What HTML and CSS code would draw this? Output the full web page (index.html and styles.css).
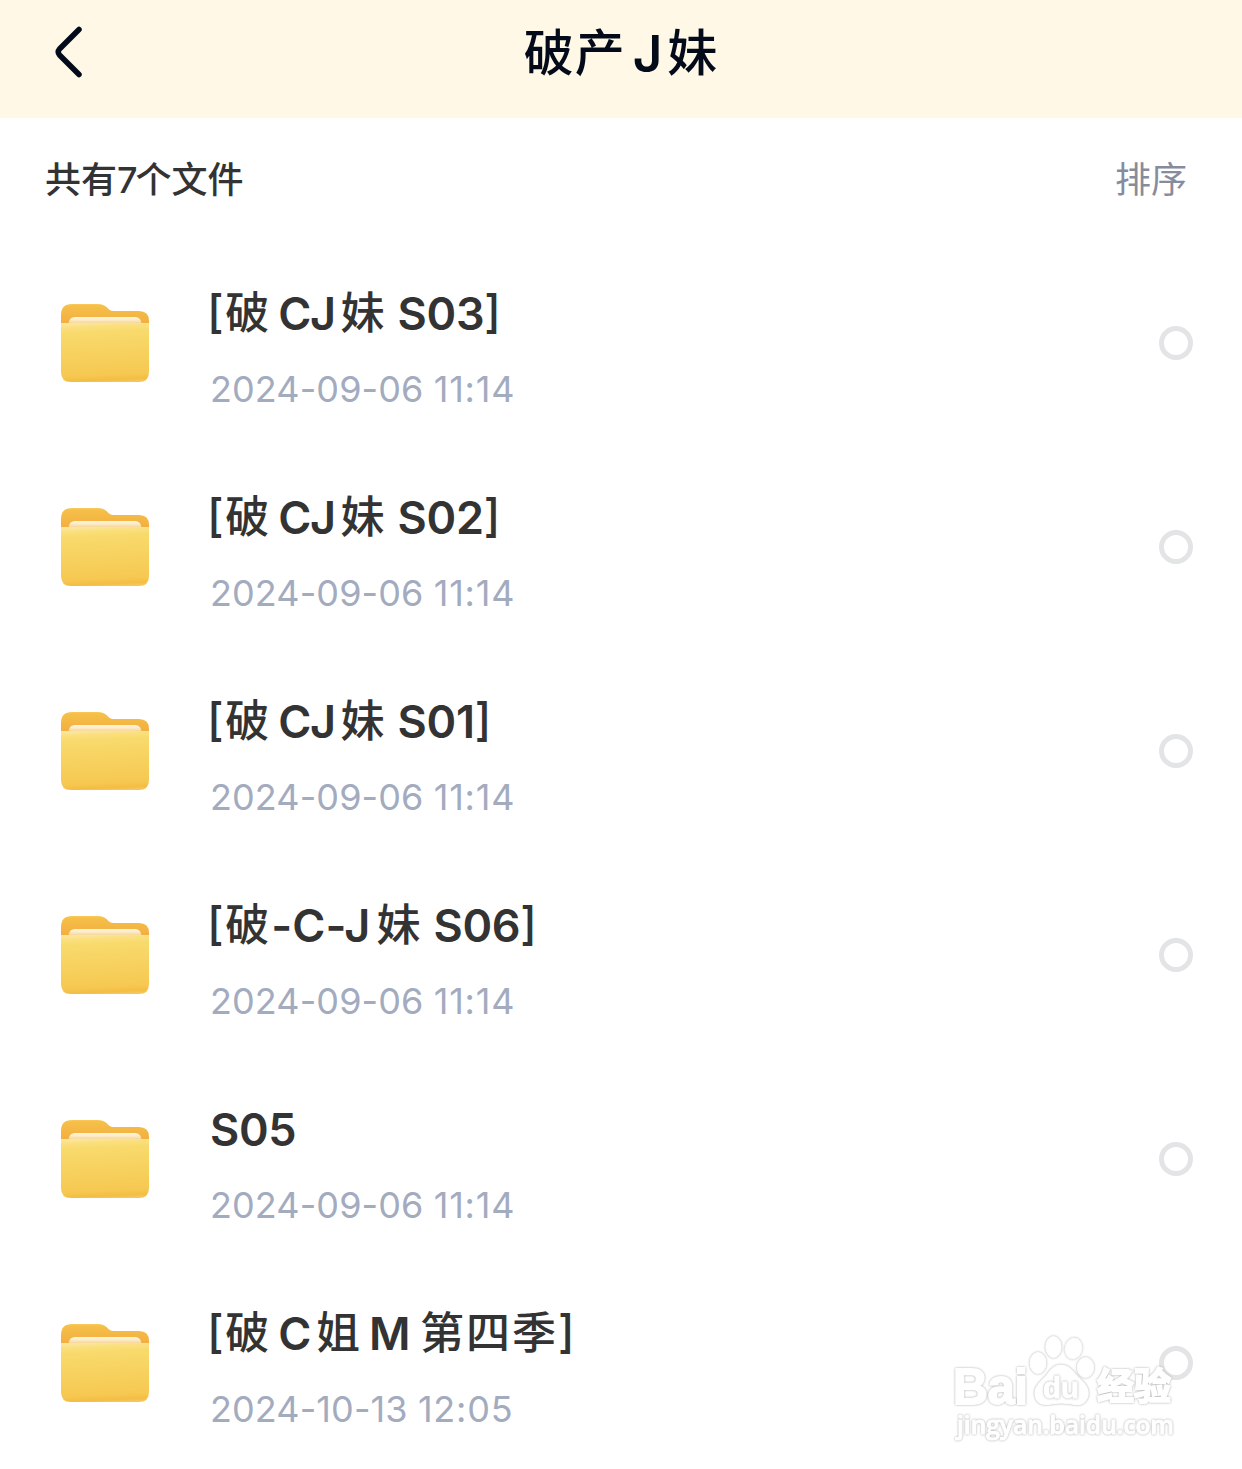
FILE: index.html
```
<!DOCTYPE html>
<html lang="zh-CN">
<head>
  <meta charset="UTF-8">
  <meta name="viewport" content="width=device-width, initial-scale=1.0">
  <title>破产J妹</title>
  <link rel="stylesheet" href="styles.css">
</head>
<body>

  <svg class="defs" width="0" height="0">
    <defs>
      <linearGradient id="folderBack" x1="0" y1="0" x2="0" y2="1">
        <stop offset="0" stop-color="#f8c859"/>
        <stop offset="0.08" stop-color="#f5bf49"/>
        <stop offset="0.6" stop-color="#f3b040"/>
      </linearGradient>
      <linearGradient id="folderPaper" x1="0" y1="0" x2="0" y2="1">
        <stop offset="0" stop-color="#fff5da"/>
        <stop offset="0.4" stop-color="#fceccb"/>
        <stop offset="1" stop-color="#f7cf86"/>
      </linearGradient>
      <linearGradient id="folderFront" x1="0.47" y1="0" x2="0.53" y2="1">
        <stop offset="0" stop-color="#fbe59a"/>
        <stop offset="0.06" stop-color="#fadf7c"/>
        <stop offset="0.15" stop-color="#f8da6c"/>
        <stop offset="0.88" stop-color="#f6c851"/>
        <stop offset="0.96" stop-color="#f4bd43"/>
        <stop offset="1" stop-color="#f5c65b"/>
      </linearGradient>
      <symbol id="folder" viewBox="0 0 90 80">
        <path fill="url(#folderBack)" d="M1 30V12Q1 1 12 1H38Q43 1 46.500 4L49 6.500Q51 8 54 8H79Q89 8 89 18V30Z"/>
        <path fill="url(#folderPaper)" d="M8.500 21Q9 14 15 14H75Q81 14 81.500 21Z"/>
        <path fill="url(#folderFront)" d="M1 20H89V69Q89 79 79 79H11Q1 79 1 69Z"/>
      </symbol>
    </defs>
  </svg>

  <header class="navbar">
    <svg class="back" viewBox="0 0 30 54">
      <path d="M25 4.500L5.500 24Q3 27 5.500 30L25 49.500"/>
    </svg>
    <h1 class="title"><span class="zh">破产</span><span class="en">J</span><span class="zh">妹</span></h1>
  </header>

  <div class="toolbar">
    <span class="count">共有<span class="num">7</span>个文件</span>
    <span class="sort">排序</span>
  </div>

  <ul class="list">
    <li class="item">
      <svg class="folder"><use href="#folder"/></svg>
      <div class="info">
        <div class="name"><span class="open">[</span><span class="zh">破</span><span class="en">CJ</span><span class="zh">妹</span> S03<span class="close">]</span></div>
        <div class="date">2024-09-06 <span class="time">11:14</span></div>
      </div>
      <span class="radio"></span>
    </li>
    <li class="item">
      <svg class="folder"><use href="#folder"/></svg>
      <div class="info">
        <div class="name"><span class="open">[</span><span class="zh">破</span><span class="en">CJ</span><span class="zh">妹</span> S02<span class="close">]</span></div>
        <div class="date">2024-09-06 <span class="time">11:14</span></div>
      </div>
      <span class="radio"></span>
    </li>
    <li class="item">
      <svg class="folder"><use href="#folder"/></svg>
      <div class="info">
        <div class="name"><span class="open">[</span><span class="zh">破</span><span class="en">CJ</span><span class="zh">妹</span> S01<span class="close">]</span></div>
        <div class="date">2024-09-06 <span class="time">11:14</span></div>
      </div>
      <span class="radio"></span>
    </li>
    <li class="item">
      <svg class="folder"><use href="#folder"/></svg>
      <div class="info">
        <div class="name"><span class="open">[</span><span class="zh">破</span><span class="en dash">-C-J</span><span class="zh">妹</span> S06<span class="close">]</span></div>
        <div class="date">2024-09-06 <span class="time">11:14</span></div>
      </div>
      <span class="radio"></span>
    </li>
    <li class="item">
      <svg class="folder"><use href="#folder"/></svg>
      <div class="info">
        <div class="name">S05</div>
        <div class="date">2024-09-06 <span class="time">11:14</span></div>
      </div>
      <span class="radio"></span>
    </li>
    <li class="item">
      <svg class="folder"><use href="#folder"/></svg>
      <div class="info">
        <div class="name"><span class="open">[</span><span class="zh">破</span><span class="en">C</span><span class="zh">姐</span><span class="en last">M</span> <span class="zh">第四季</span><span class="close">]</span></div>
        <div class="date">2024-10-13 <span class="time">12:05</span></div>
      </div>
      <span class="radio"></span>
    </li>
  </ul>

  <svg class="watermark" viewBox="0 0 250 130">
    <g class="mark">
      <text class="mark-logo" x="10" y="79" textLength="75" lengthAdjust="spacingAndGlyphs">Bai</text>
      <ellipse cx="95" cy="38" rx="8" ry="10.500"/>
      <ellipse cx="110.500" cy="22" rx="7.700" ry="10.500"/>
      <ellipse cx="130.500" cy="23.500" rx="8.200" ry="10.500" transform="rotate(12 130.500 23.500)"/>
      <ellipse cx="142.500" cy="42.500" rx="8.200" ry="10"/>
      <path d="M118 40C127 40 131 48 137 54C144 60 146 65 145 71C143 79 137 81 129 79Q118 77 108 79C99 81 93 78 92 70C91 63 96 58 101 53C107 47 109 40 118 40Z"/>
      <text class="mark-du" x="100" y="73" textLength="36" lengthAdjust="spacingAndGlyphs">du</text>
      <text class="mark-zh" x="154" y="75" textLength="74" lengthAdjust="spacingAndGlyphs">经验</text>
      <text class="mark-url" x="14" y="109" textLength="217" lengthAdjust="spacingAndGlyphs">jingyan.baidu.com</text>
    </g>
  </svg>

</body>
</html>
```
FILE: styles.css
```
* { box-sizing: border-box; margin: 0; padding: 0; }
body {
  position: relative;
  width: 1242px;
  height: 1469px;
  overflow: hidden;
  background-color: #fff;
  color: #333;
  font-family: Inter, "Noto Sans CJK SC", sans-serif;
  font-feature-settings: "calt" 0;
}
.defs {
  display: block;
}
.navbar {
  display: grid;
  grid-template-columns: 120px 1fr 120px;
  height: 118px;
  background-color: #fff8e7;
  color: #030b1a;
}
.back {
  width: 30px;
  height: 54px;
  margin: 25px 0 0 54px;
  fill: none;
  stroke: #030b1a;
  stroke-width: 5.5;
  stroke-linecap: round;
  stroke-linejoin: round;
}
.title {
  font-size: 51px;
  font-weight: 600;
  line-height: 107px;
  text-align: center;
  white-space: nowrap;
}
.title .zh {
  font-size: 50px;
  letter-spacing: 1px;
}
.title .en {
  margin: 0 5px 0 7px;
}
.zh {
  font-family: "Noto Sans CJK SC", sans-serif;
  font-weight: 500;
  line-height: 0;
  vertical-align: 1px;
}
.toolbar {
  display: flex;
  justify-content: space-between;
  align-items: center;
  height: 123px;
  padding: 0 55px 5px 45px;
  font-size: 36px;
  font-family: "Noto Sans CJK SC", sans-serif;
}
.count {
  font-weight: 500;
}
.num {
  margin-right: -2px;
  font-family: Inter, sans-serif;
}
.sort {
  color: #878c9c;
}
.list {
  list-style: none;
}
.item {
  display: flex;
  align-items: center;
  height: 204px;
  padding: 0 49px 0 60px;
}
.folder {
  width: 90px;
  height: 80px;
}
.info {
  flex: 1;
  margin-left: 60px;
  padding-top: 12px;
}
.name {
  height: 57px;
  font-size: 45px;
  font-weight: 600;
  line-height: 57px;
  letter-spacing: -0.3px;
  white-space: nowrap;
}
.name .zh {
  font-size: 44px;
  letter-spacing: 2px;
}
.name .en {
  margin: 0 6px 0 7px;
  letter-spacing: -1.5px;
}
.name .dash {
  margin-left: 0;
  letter-spacing: 0;
}
.name .last {
  margin-right: 0;
}
.open,
.close {
  font-weight: 500;
  font-feature-settings: "case";
}
.open {
  margin: 0 2px 0 -3px;
}
.date {
  margin-top: 22px;
  height: 50px;
  color: #a3abbf;
  font-size: 36px;
  line-height: 50px;
  letter-spacing: 0.1px;
}
.time {
  letter-spacing: 0.8px;
}
.radio {
  width: 34px;
  height: 34px;
  border: 5px solid #e3e4e6;
  border-radius: 50%;
}
.watermark {
  position: absolute;
  left: 943px;
  top: 1325px;
  width: 250px;
  height: 130px;
}
.mark {
  fill: #fff;
  stroke: #fff;
  stroke-width: 1;
}
.mark > * {
  filter: drop-shadow(0 0 0.8px #aaa);
}
.mark-logo {
  font: bold 50px "Liberation Sans", sans-serif;
  stroke-width: 2;
}
.mark-du {
  font: bold 29px "Liberation Sans", sans-serif;
}
.mark-zh {
  font: bold 37px "Noto Sans CJK SC", sans-serif;
  stroke-width: 2;
}
.mark-url {
  font: 600 25px "Open Sans", sans-serif;
}
```
